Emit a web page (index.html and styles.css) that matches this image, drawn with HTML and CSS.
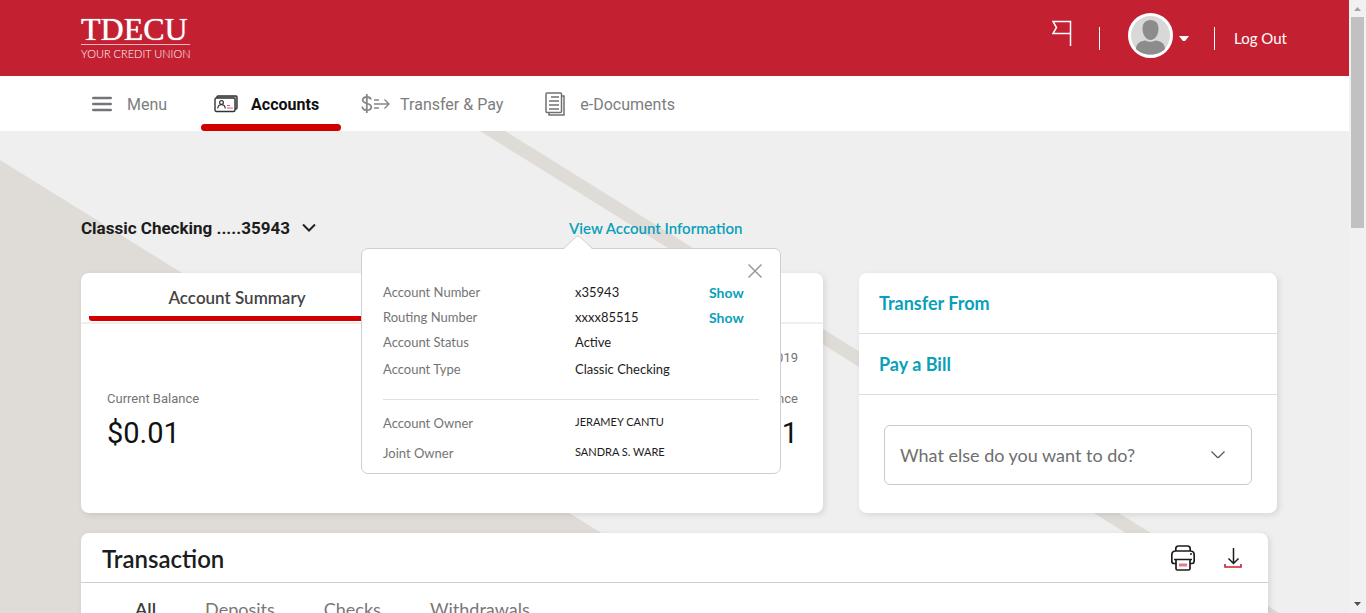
FILE: index.html
```html
<!DOCTYPE html>
<html lang="en">
<head>
<meta charset="utf-8">
<title>TDECU Accounts</title>
<link rel="stylesheet" href="styles.css">
</head>
<body>
<div class="app">
  <div class="page">
    <header class="topbar">
      <a class="logo" href="#">
        <span class="logo-name">TDECU</span>
        <span class="logo-tag">YOUR CREDIT UNION</span>
      </a>
      <div class="tools">
        <button class="icon-btn flag" aria-label="Notifications">
          <svg width="20" height="26" viewBox="0 0 20 26" fill="none" stroke="#fff" stroke-width="1.5"><path d="M18.500 26V1.500H1l3.500 6L1 13.500h17.500"/></svg>
        </button>
        <span class="rule"></span>
        <button class="icon-btn profile" aria-label="Profile">
          <svg width="45" height="45" viewBox="0 0 45 45"><circle cx="22.500" cy="22.500" r="21" fill="#d8d8d8" stroke="#fff" stroke-width="3"/><path d="M22.500 7c5.500 0 8 3.500 8 9s-3.500 11-8 11-8-5.500-8-11 2.500-9 8-9z" fill="#8c8c8c"/><path d="M8 36c0-6 5-8 9.500-8.500 3 1.800 7 1.800 10 0C32 28 37 30 37 36c-4 4-9 5.500-14.500 5.500S12 40 8 36z" fill="#8c8c8c"/></svg>
          <svg width="10" height="6" viewBox="0 0 10 6"><path d="M0 0h10L6.500 4.500q-1.500 1-3 0z" fill="#fff"/></svg>
        </button>
        <span class="rule"></span>
        <a class="logout" href="#">Log Out</a>
      </div>
    </header>

    <nav class="nav">
      <button class="nav-item menu"><svg width="20" height="16" viewBox="0 0 20 16" stroke="#757579" stroke-width="2.600" stroke-linecap="round"><path d="M1.300 2h17.400M1.300 8h17.400M1.300 14h17.400"/></svg>Menu</button>
      <a class="nav-item active" href="#"><svg width="24" height="18" viewBox="0 0 24 18" fill="none" stroke="#333" stroke-width="1.400"><path d="M3 3V2q0-1 1-1h18q1 0 1 1v11q0 1-1 1h-1" fill="#bbb"/><rect x="1" y="3" width="20" height="13.500" rx="1.500" fill="#fff"/><circle cx="7.500" cy="7.500" r="1.900" stroke-width="1.200"/><path d="M3.800 13.500c0-5 7.400-5 7.400 0" stroke-width="1.200"/><path d="M13 10.500h3M13 13h6" stroke="#dc5c6c" stroke-width="1.200"/></svg>Accounts</a>
      <a class="nav-item transfer" href="#"><svg width="29" height="20" viewBox="0 0 29 20" fill="none" stroke="#878787"><path d="M10 5.500C9.500 3.500 8 3 5.800 3 3.300 3 1.700 4.200 1.700 6c0 4.500 8.600 2.500 8.600 7 0 2-1.800 3.200-4.500 3.200S1.500 15 1.200 12.700M5.800 0v19" stroke-width="1.800"/><path d="M13 6h5M13 10h15M13 14h5M23.500 5.500 28 10l-4.500 4.500" stroke-width="1.400"/></svg>Transfer &amp; Pay</a>
      <a class="nav-item docs" href="#"><svg width="20" height="24" viewBox="0 0 20 24" fill="none" stroke="#717171" stroke-width="1.500"><path d="M17 4h2v19H4v-2"/><rect x="1" y="1" width="15.500" height="19.500" rx="1"/><path d="M6 5h8M4 9h10M4 13h10M4 17h10"/></svg>e-Documents</a>
    </nav>

    <main class="main">
      <svg class="backdrop" aria-hidden="true"><path d="M0 29 940 612H0zM480 0h25l980 610h-25z" fill="#dfdcd7"/></svg>
      <div class="account-row">
        <button class="account-picker">Classic Checking .....35943<svg width="14" height="10" viewBox="0 0 14 10" fill="none" stroke="#222" stroke-width="2"><path d="m1 1.500 6 6 6-6"/></svg></button>
        <div class="info">
          <a class="info-link" href="#">View Account Information</a>
          <section class="popover" aria-label="Account information">
            <svg class="pointer" width="28" height="14" viewBox="0 0 28 14"><path d="M0 14 12 2q2-2 4 0l12 12z" fill="#fff"/><path d="M0 13 12 2q2-2 4 0l12 11" fill="none" stroke="#d2d2d2"/></svg>
            <button class="icon-btn close" aria-label="Close"><svg width="14" height="14" viewBox="0 0 14 14" stroke="#999" stroke-width="1.500"><path d="m.5.5 13 13m0-13-13 13"/></svg></button>
            <dl class="details">
              <div><dt>Account Number</dt><dd>x35943</dd><dd><button class="show">Show</button></dd></div>
              <div><dt>Routing Number</dt><dd>xxxx85515</dd><dd><button class="show">Show</button></dd></div>
              <div><dt>Account Status</dt><dd>Active</dd></div>
              <div class="type"><dt>Account Type</dt><dd>Classic Checking</dd></div>
            </dl>
            <dl class="details owners">
              <div><dt>Account Owner</dt><dd>JERAMEY CANTU</dd></div>
              <div><dt>Joint Owner</dt><dd>SANDRA S. WARE</dd></div>
            </dl>
          </section>
        </div>
      </div>

      <div class="cards">
        <section class="card summary">
          <div class="summary-head"><button class="summary-tab">Account Summary</button></div>
          <div class="summary-body">
            <div class="balance"><span>Current Balance</span><strong>$0.01</strong></div>
            <div class="balance end"><span class="date">2019</span><span>Balance</span><strong>$0.01</strong></div>
          </div>
        </section>
        <section class="card actions">
          <a class="action" href="#">Transfer From</a>
          <a class="action" href="#">Pay a Bill</a>
          <div class="more">
            <select aria-label="What else do you want to do?"><option>What else do you want to do?</option></select>
            <svg class="more-arrow" width="14" height="8" viewBox="0 0 14 8" fill="none" stroke="#555" stroke-width="1.200"><path d="m.5.5 5.500 5.500q1 1 2 0L13.500.5"/></svg>
          </div>
        </section>
      </div>

      <section class="card transactions">
        <div class="tx-head">
          <h2>Transaction</h2>
          <div class="tx-tools">
            <button class="icon-btn" aria-label="Print"><svg width="24" height="26" viewBox="0 0 24 26" fill="none" stroke="#1c1c1c" stroke-width="1.700"><path d="M4.800 6V3.500Q5 1 7.500 1h9Q19 1 19.200 3.500V6M5 18.500H3q-2.200 0-2.200-2.500v-6q0-4 4-4h14.400q4 0 4 4v6q0 2.500-2.200 2.500h-2"/><path d="M3 14.500h18M5 14.500v9q0 1.500 1.500 1.500h11q1.500 0 1.500-1.500v-9"/><path d="M19 9h2" stroke-width="1.400"/><path d="M8 20h8" stroke="#d9505f" stroke-width="3" opacity=".75"/></svg></button>
            <button class="icon-btn" aria-label="Download"><svg width="18" height="20" viewBox="0 0 18 20" fill="none" stroke="#1c1c1c" stroke-width="1.500"><path d="M9.500 0v15M4.500 10.500l5 5 5-5"/><path d="M1 16v3h16v-3" stroke="#c32131" stroke-width="1.600"/></svg></button>
          </div>
        </div>
        <div class="filters">
          <button class="filter selected">All</button><button class="filter">Deposits</button><button class="filter">Checks</button><button class="filter">Withdrawals</button>
        </div>
      </section>
    </main>
  </div>
  <div class="scroll" aria-hidden="true">
    <svg width="17" height="17" viewBox="0 0 17 17"><path d="m5 11 3.500-4 3.500 4z" fill="#a3a3a3"/></svg>
    <span class="thumb"></span>
    <svg class="down" width="17" height="17" viewBox="0 0 17 17"><path d="m5 6 3.500 4L12 6z" fill="#505050"/></svg>
  </div>
</div>
</body>
</html>
```
FILE: styles.css
```css
* { box-sizing: border-box; }
body { margin: 0; font-family: Lato, "Open Sans", sans-serif; color: #1c1c1c; }
button { border: 0; padding: 0; background: none; font: inherit; color: inherit; cursor: pointer; }
a { color: inherit; text-decoration: none; }
svg { display: block; flex: none; }
h2, dl, dd { margin: 0; }

.app { display: flex; height: 100vh; overflow: hidden; }
.page { flex: 1; display: flex; flex-direction: column; min-width: 0; background: #efefef; }
.icon-btn { display: flex; align-items: center; }

.topbar { flex: none; height: 76px; padding: 0 62px 0 81px; display: flex; justify-content: space-between; align-items: center; background: #c32131; color: #fff; }
.logo { display: flex; flex-direction: column; }
.logo-name { font: 32px/30px "Liberation Serif", serif; text-shadow: 0 0 1px #fff; border-bottom: 1px solid #f1b9bf; }
.logo-tag { font-size: 11px; font-weight: 300; line-height: 18px; }
.tools { display: flex; align-items: center; gap: 19px; }
.flag { margin-right: 8px; padding-bottom: 10px; }
.profile { gap: 6px; margin-left: 9px; padding-bottom: 6px; }
.profile svg:last-child { margin-top: 8px; }
.rule { width: 1px; height: 23px; background: #fff; }
.profile + .rule { margin-left: 6px; }
.logout { font-size: 15px; }

.nav { flex: none; height: 55px; padding-left: 92px; display: flex; background: #fff; font: 16px Roboto, sans-serif; color: #7d7d7d; }
.nav-item { display: flex; align-items: center; border-bottom: 7px solid transparent; padding-top: 8px; }
.menu { gap: 15px; margin-right: 34px; }
.active { position: relative; width: 140px; padding-left: 13px; gap: 13px; font-weight: 700; color: #111; }
.active::after { content: ""; position: absolute; left: 0; right: 0; bottom: -7px; height: 7px; border-radius: 4px; background: #d00000; }
.transfer { margin-left: 20px; gap: 10px; }
.docs { margin-left: 42px; gap: 15px; }

.main { position: relative; flex: 1; padding: 81px 72px 0 81px; }
.backdrop { position: absolute; inset: 0; width: 100%; height: 100%; }
.account-row { position: relative; z-index: 2; height: 61px; display: grid; grid-template-columns: 488px 1fr; align-items: start; }
.account-picker { display: flex; align-items: center; gap: 12px; font: 700 17px/32px Roboto, sans-serif; }
.info { position: relative; justify-self: start; }
.info-link { font-size: 15px; line-height: 32px; font-weight: 600; color: #0a9fba; }

.popover { position: absolute; top: 36px; left: -208px; width: 420px; padding: 31px 21px 5px; background: #fff; border: 1px solid #cfcfcf; border-radius: 7px; font-size: 13px; }
.pointer { position: absolute; top: -14px; left: 202px; }
.close { position: absolute; top: 15px; right: 18px; }
.details > div { display: grid; grid-template-columns: 192px 134px auto; line-height: 25px; }
.details > .type { line-height: 29px; }
.details dt { color: #747474; }
.details + .details { margin-top: 15px; padding-top: 8px; border-top: 1px solid #e0e0e0; }
.details.owners > div { line-height: 30px; }
.owners dd { font-size: 11px; line-height: 28px; }
.show { display: block; font-size: 14px; line-height: 25px; font-weight: 700; color: #0a9fba; }

.card { background: #fff; border-radius: 8px; box-shadow: 2px 2px 6px rgba(0, 0, 0, .1); }
.cards { position: relative; display: grid; grid-template-columns: 742fr 418fr; gap: 36px; }
.summary { display: flex; flex-direction: column; }
.summary-head { height: 51px; padding-left: 8px; display: flex; border-bottom: 2px solid #efefef; }
.summary-tab { width: 296px; height: 48px; border-bottom: 5px solid #d00000; border-radius: 3px; font-size: 17px; font-weight: 600; color: #444; padding-top: 5px; }
.summary-body { flex: 1; padding: 20px 25px 0 26px; display: flex; justify-content: space-between; }
.balance { display: flex; flex-direction: column; padding-top: 43px; font: 13px/24px Roboto, sans-serif; color: #747474; }
.balance strong { font-size: 29px; line-height: 44px; font-weight: 400; color: #111; }
.balance.end { padding-top: 2px; text-align: right; }
.date { margin-bottom: 17px; }
.action { display: block; padding-left: 20px; line-height: 60px; border-bottom: 1px solid #dedede; font-size: 18px; font-weight: 700; color: #0a9fba; }
.more { position: relative; padding: 30px 25px 28px; }
.more select { appearance: none; width: 100%; height: 60px; padding: 0 15px; border: 1px solid #cacaca; border-radius: 6px; background: #fff; font: 18px Lato, sans-serif; color: #6e6e6e; }
.more-arrow { position: absolute; right: 52px; top: 56px; pointer-events: none; }

.transactions { position: relative; margin: 20px 9px 0 0; }
.tx-head { height: 50px; padding: 0 26px 0 21px; display: flex; align-items: center; justify-content: space-between; border-bottom: 1px solid #cfcfcf; }
.tx-head h2 { font-size: 24px; font-weight: 600; padding-top: 2px; }
.tx-tools { display: flex; align-items: center; gap: 29px; }
.filters { display: flex; gap: 49px; padding: 11px 54px 20px; font-size: 18px; line-height: 30px; color: #777; }
.filter { line-height: 30px; }
.selected { font-weight: 600; color: #3c3c3c; }

.scroll { flex: none; width: 17px; display: flex; flex-direction: column; align-items: center; background: #f1f1f1; }
.thumb { width: 13px; height: 211px; background: #c1c1c1; }
.down { margin-top: auto; }
```
